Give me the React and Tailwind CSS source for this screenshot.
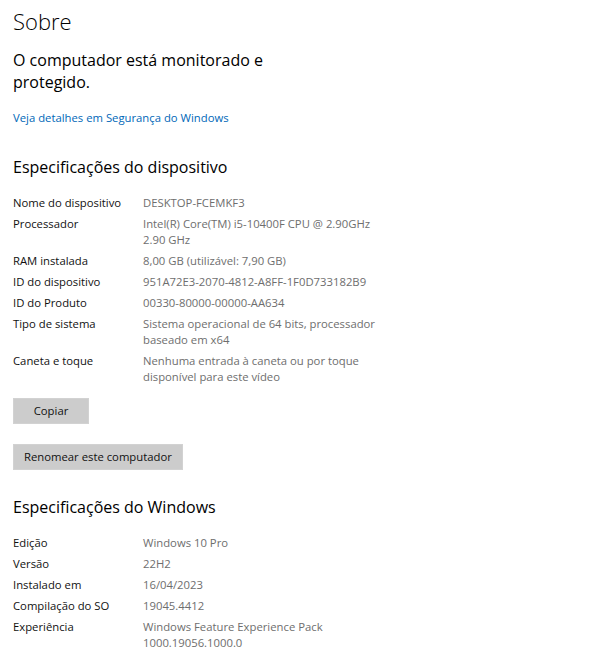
import React from 'react'

const deviceSpecs = [
  ['Nome do dispositivo', 'DESKTOP-FCEMKF3'],
  ['Processador', 'Intel(R) Core(TM) i5-10400F CPU @ 2.90GHz 2.90 GHz'],
  ['RAM instalada', '8,00 GB (utilizável: 7,90 GB)'],
  ['ID do dispositivo', '951A72E3-2070-4812-A8FF-1F0D733182B9'],
  ['ID do Produto', '00330-80000-00000-AA634'],
  ['Tipo de sistema', 'Sistema operacional de 64 bits, processador baseado em x64'],
  ['Caneta e toque', 'Nenhuma entrada à caneta ou por toque disponível para este vídeo'],
]

const windowsSpecs = [
  ['Edição', 'Windows 10 Pro'],
  ['Versão', '22H2'],
  ['Instalado em', '16/04/2023'],
  ['Compilação do SO', '19045.4412'],
  ['Experiência', 'Windows Feature Experience Pack 1000.19056.1000.0'],
]

// label / value table like the Windows Settings "Sobre" page
const SpecList = ({ rows }) => (
  <div className="flex flex-col gap-[5px]">
    {rows.map(([label, value]) => (
      <div key={label} className="flex text-[11.3px] leading-[16px]">
        <div className="w-[130px] shrink-0 text-[#111111]">{label}</div>
        <div className="w-[240px] text-[#6e6e6e]">{value}</div>
      </div>
    ))}
  </div>
)

const Button = ({ children }) => (
  <button className="h-[26px] min-w-[76px] px-[10px] bg-[#cccccc] border border-[#d2d2d2] text-[11.3px] text-[#111111]">
    {children}
  </button>
)

export default function App() {
  return (
    <div
      className="w-[600px] h-[654px] bg-white px-[13px] pt-[7px] overflow-hidden"
      style={{ fontFamily: '"Open Sans", "Noto Sans", sans-serif' }}
    >
      <h1 className="text-[22px] leading-[28px] font-light text-black">Sobre</h1>

      <p className="mt-[14px] w-[270px] text-[16px] leading-[22px] text-black">
        O computador está monitorado e protegido.
      </p>

      <a className="block mt-[17px] text-[11.3px] leading-[16px] text-[#0067b8]">
        Veja detalhes em Segurança do Windows
      </a>

      <h2 className="mt-[30px] text-[16px] leading-[22px] text-black">Especificações do dispositivo</h2>
      <div className="mt-[17px]">
        <SpecList rows={deviceSpecs} />
      </div>

      <div className="mt-[13px] flex flex-col items-start gap-[20px]">
        <Button>Copiar</Button>
        <Button>Renomear este computador</Button>
      </div>

      <h2 className="mt-[26px] text-[16px] leading-[22px] text-black">Especificações do Windows</h2>
      <div className="mt-[17px]">
        <SpecList rows={windowsSpecs} />
      </div>
    </div>
  )
}
